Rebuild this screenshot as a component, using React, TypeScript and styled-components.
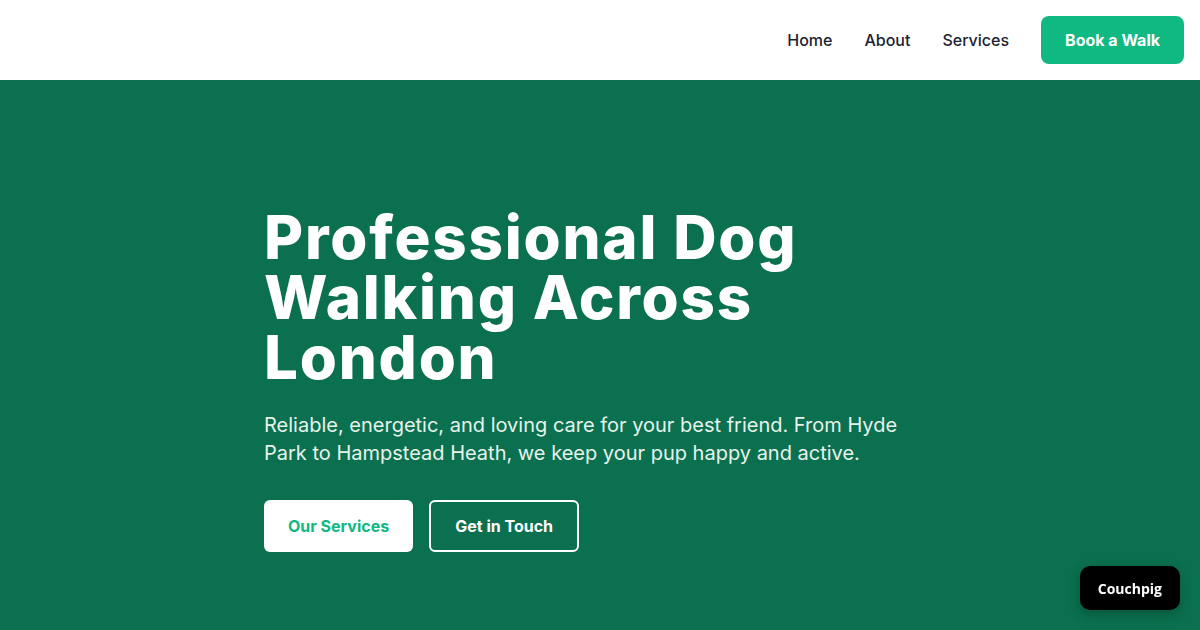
import React from "react";
import styled, { createGlobalStyle } from "styled-components";

const Global = createGlobalStyle`
  html, body { margin: 0; padding: 0; }
  body { font-family: Inter, "Noto Sans", sans-serif; background: #0b704f; }
  * { box-sizing: border-box; }
`;

const Header = styled.header`
  height: 80px;
  background: #ffffff;
  display: flex;
  align-items: center;
  justify-content: flex-end;
  padding: 0 16px;
`;

const Nav = styled.nav`
  display: flex;
  align-items: center;
  gap: 32px;
`;

const NavLink = styled.a`
  font-size: 16px;
  font-weight: 500;
  color: #1b1f33;
  text-decoration: none;
`;

const CtaButton = styled.a`
  display: inline-flex;
  align-items: center;
  justify-content: center;
  height: 48px;
  padding: 0 24px;
  background: #10b981;
  color: #ffffff;
  font-size: 16px;
  font-weight: 700;
  border-radius: 8px;
  text-decoration: none;
`;

const Hero = styled.section`
  background: #0b704f;
  min-height: 550px;
  display: flex;
  justify-content: center;
  padding-top: 127px;
`;

const Content = styled.div`
  width: 672px;
  display: flex;
  flex-direction: column;
`;

const Title = styled.h1`
  margin: 0;
  font-family: Inter, sans-serif;
  font-weight: 800;
  font-size: 60px;
  line-height: 60px;
  color: #ffffff;
  letter-spacing: 1.8px;
`;

const Lead = styled.p`
  margin: 24px 0 0;
  font-size: 20px;
  line-height: 28px;
  color: #e6f3ec;
  max-width: 650px;
`;

const Actions = styled.div`
  display: flex;
  gap: 16px;
  margin-top: 33px;
`;

const HeroButton = styled.a<{ $variant: "solid" | "outline" }>`
  display: inline-flex;
  align-items: center;
  justify-content: center;
  height: 52px;
  padding: 0 24px;
  border-radius: 6px;
  font-size: 16px;
  font-weight: 700;
  text-decoration: none;
  background: ${(p) => (p.$variant === "solid" ? "#ffffff" : "transparent")};
  color: ${(p) => (p.$variant === "solid" ? "#10b981" : "#ffffff")};
  border: ${(p) => (p.$variant === "solid" ? "none" : "2px solid #ffffff")};
`;

const Badge = styled.div`
  position: fixed;
  right: 20px;
  bottom: 20px;
  height: 44px;
  padding: 0 18px;
  display: flex;
  align-items: center;
  background: #000000;
  color: #ffffff;
  border-radius: 10px;
  font-family: "Open Sans", Inter, sans-serif;
  font-weight: 700;
  font-size: 14px;
  box-shadow: 0 4px 12px rgba(0, 0, 0, 0.25);
`;

export default function App() {
  return (
    <>
      <Global />
      <Header>
        <Nav>
          <NavLink href="#">Home</NavLink>
          <NavLink href="#">About</NavLink>
          <NavLink href="#">Services</NavLink>
          <CtaButton href="#">Book a Walk</CtaButton>
        </Nav>
      </Header>
      <Hero>
        <Content>
          <Title>Professional Dog Walking Across London</Title>
          <Lead>
            Reliable, energetic, and loving care for your best friend. From Hyde
            Park to Hampstead Heath, we keep your pup happy and active.
          </Lead>
          <Actions>
            <HeroButton $variant="solid" href="#">Our Services</HeroButton>
            <HeroButton $variant="outline" href="#">Get in Touch</HeroButton>
          </Actions>
        </Content>
      </Hero>
      <Badge>Couchpig</Badge>
    </>
  );
}
